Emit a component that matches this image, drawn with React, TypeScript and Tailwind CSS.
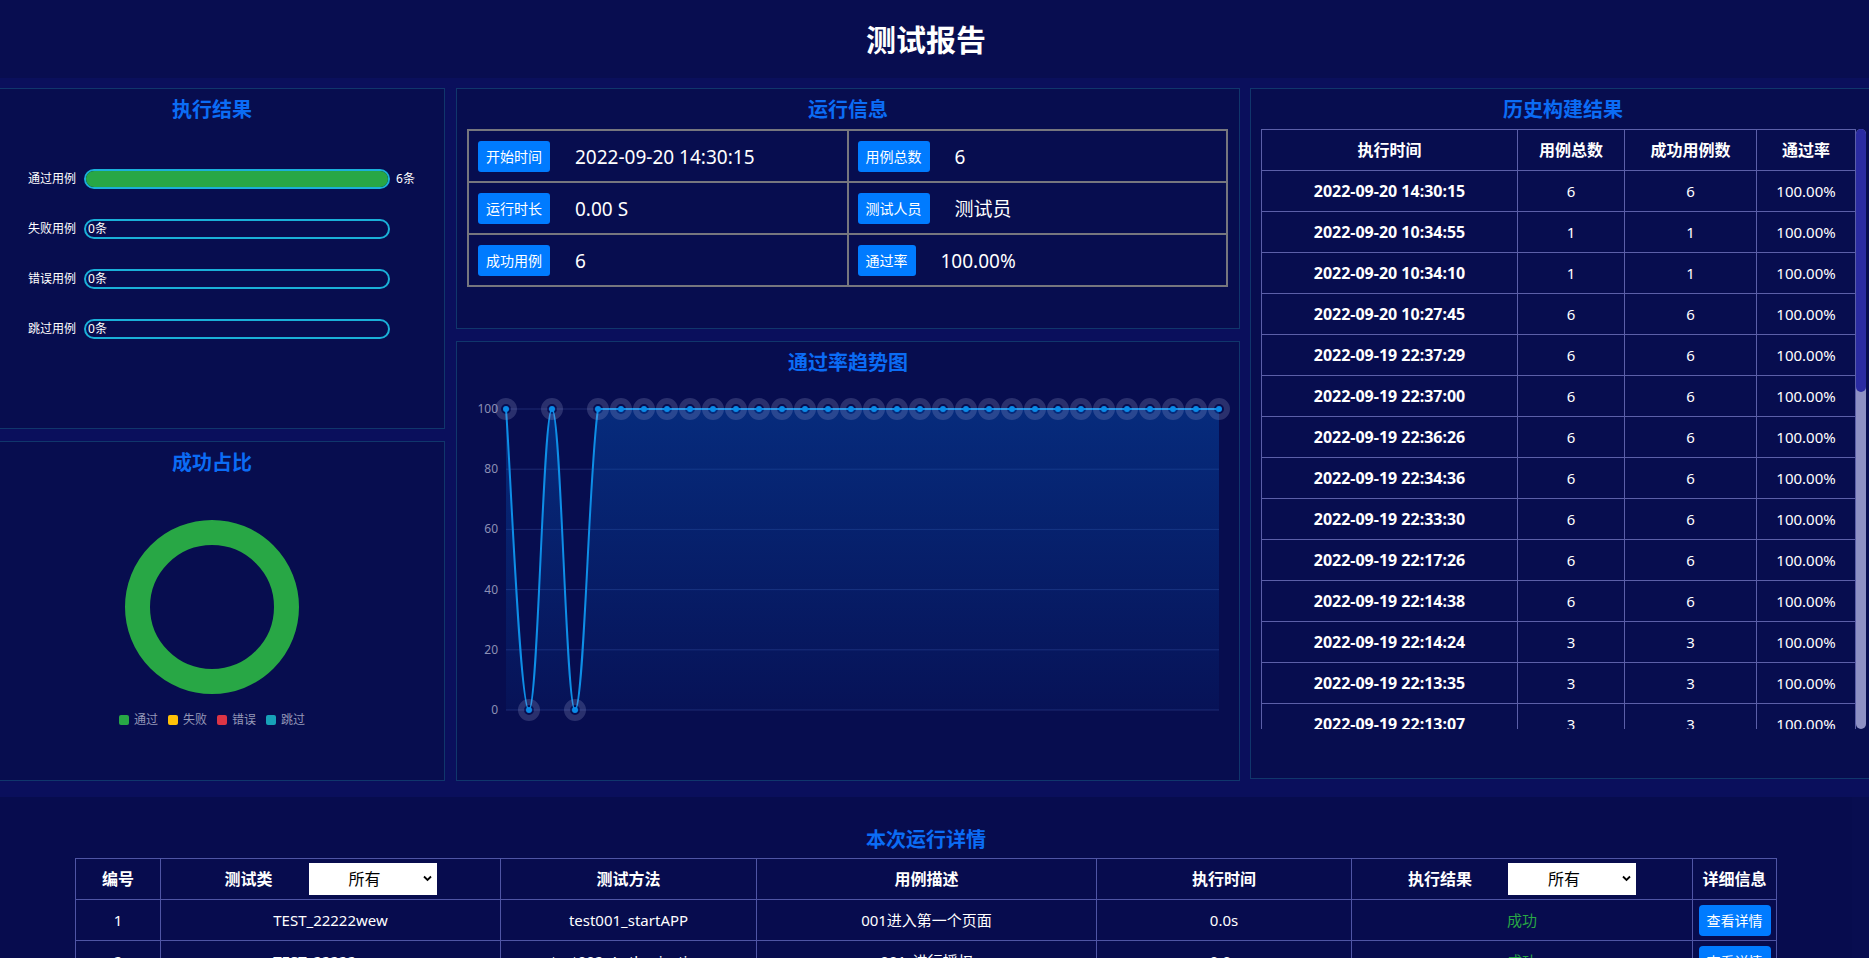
import React from 'react';

// Текстовый шрифт страницы
const font = "font-['Noto_Sans','Noto_Sans_CJK_SC',sans-serif]";

// Результаты выполнения
const results = [
  { label: '通过用例', count: 6, filled: true },
  { label: '失败用例', count: 0, filled: false },
  { label: '错误用例', count: 0, filled: false },
  { label: '跳过用例', count: 0, filled: false },
];

const legend = [
  { label: '通过', color: 'bg-[#28a745]' },
  { label: '失败', color: 'bg-[#ffc107]' },
  { label: '错误', color: 'bg-[#dc3545]' },
  { label: '跳过', color: 'bg-[#17a2b8]' },
];

const history: [string, number, number][] = [
  ['2022-09-20 14:30:15', 6, 6],
  ['2022-09-20 10:34:55', 1, 1],
  ['2022-09-20 10:34:10', 1, 1],
  ['2022-09-20 10:27:45', 6, 6],
  ['2022-09-19 22:37:29', 6, 6],
  ['2022-09-19 22:37:00', 6, 6],
  ['2022-09-19 22:36:26', 6, 6],
  ['2022-09-19 22:34:36', 6, 6],
  ['2022-09-19 22:33:30', 6, 6],
  ['2022-09-19 22:17:26', 6, 6],
  ['2022-09-19 22:14:38', 6, 6],
  ['2022-09-19 22:14:24', 3, 3],
  ['2022-09-19 22:13:35', 3, 3],
  ['2022-09-19 22:13:07', 3, 3],
  ['2022-09-19 22:12:41', 3, 3],
  ['2022-09-19 22:10:02', 3, 3],
  ['2022-09-19 21:58:47', 3, 3],
  ['2022-09-19 21:55:13', 3, 3],
  ['2022-09-19 21:50:36', 2, 2],
  ['2022-09-19 21:47:20', 2, 2],
  ['2022-09-19 21:40:09', 2, 2],
  ['2022-09-19 21:32:54', 2, 2],
  ['2022-09-19 21:30:18', 2, 2],
  ['2022-09-19 21:21:45', 2, 2],
  ['2022-09-19 21:16:07', 2, 2],
  ['2022-09-19 21:10:33', 2, 2],
  ['2022-09-19 20:58:29', 1, 1],
  ['2022-09-19 20:51:12', 1, 1],
  ['2022-09-19 20:44:50', 1, 1],
  ['2022-09-19 20:40:03', 1, 1],
  ['2022-09-19 20:36:27', 1, 1],
  ['2022-09-19 20:31:15', 1, 1],
];

// Точки графика: два провала, дальше всё 100
const trend = Array.from({ length: 32 }, (_, i) => (i === 1 || i === 3 ? 0 : 100));

const details = [
  ['1', 'TEST_22222wew', 'test001_startAPP', '001进入第一个页面', '0.0s'],
  ['2', 'TEST_22222wew', 'test002_Authorization', '001_进行授权', '0.0s'],
  ['3', 'TEST_22222wew', 'test003_login', '003登录', '0.0s'],
  ['4', 'TEST_22222wew', 'test004_search', '004搜索', '0.0s'],
  ['5', 'TEST_22222wew', 'test005_detail', '005查看详情', '0.0s'],
  ['6', 'TEST_22222wew', 'test006_logout', '006退出登录', '0.0s'],
];

const Panel = ({ title, className, children }: { title: string; className?: string; children?: React.ReactNode }) => (
  <div className={`border border-[#10366c] bg-[#070d4f] flex flex-col ${className ?? ''}`}>
    <h2 className="pt-[8px] text-center text-[20px] leading-[26px] font-bold text-[#0b6cf5]">{title}</h2>
    {children}
  </div>
);

const Badge = ({ text }: { text: string }) => (
  <span className="inline-flex h-[31px] items-center rounded-[3px] bg-[#007bff] px-2 text-[14px] text-white">{text}</span>
);

// Сглаженная линия как в echarts
const smoothPath = (pts: [number, number][]) => {
  const s = 0.4;
  let d = `M${pts[0][0]},${pts[0][1]}`;
  for (let i = 0; i < pts.length - 1; i++) {
    const p0 = pts[i - 1] ?? pts[i];
    const p1 = pts[i];
    const p2 = pts[i + 1];
    const p3 = pts[i + 2] ?? p2;
    const lo = Math.min(p1[1], p2[1]);
    const hi = Math.max(p1[1], p2[1]);
    const c1x = p1[0] + (p2[0] - p0[0]) * s * 0.5;
    const c1y = Math.min(hi, Math.max(lo, p1[1] + (p2[1] - p0[1]) * s * 0.5));
    const c2x = p2[0] - (p3[0] - p1[0]) * s * 0.5;
    const c2y = Math.min(hi, Math.max(lo, p2[1] - (p3[1] - p1[1]) * s * 0.5));
    d += ` C${c1x},${c1y} ${c2x},${c2y} ${p2[0]},${p2[1]}`;
  }
  return d;
};

const TrendChart = () => {
  const x0 = 49;
  const step = 23;
  const base = 331;
  const pts = trend.map((v, i) => [x0 + i * step, base - v * 3.01] as [number, number]);
  const line = smoothPath(pts);
  const last = pts[pts.length - 1][0];
  const area = `${line} L${last},${base} L${x0},${base} Z`;
  const ticks = [100, 80, 60, 40, 20, 0];

  return (
    <svg width="782" height="390" className="mt-[3px]">
      <defs>
        <linearGradient id="areaFill" x1="0" y1="0" x2="0" y2="1">
          <stop offset="0%" stopColor="#0550b4" stopOpacity="0.45" />
          <stop offset="100%" stopColor="#0550b4" stopOpacity="0.08" />
        </linearGradient>
      </defs>
      {ticks.map((t) => {
        const y = base - t * 3.01;
        return (
          <g key={t}>
            <line x1={x0} x2={last} y1={y} y2={y} stroke="#1e2a72" strokeWidth="1" />
            <text x="41" y={y + 4} textAnchor="end" fontSize="12" fill="#8c8fb5" fontFamily="Noto Sans, sans-serif">
              {t}
            </text>
          </g>
        );
      })}
      <path d={area} fill="url(#areaFill)" />
      <path d={line} fill="none" stroke="#0e8ee6" strokeWidth="2" />
      {pts.map(([x, y], i) => (
        <g key={i}>
          <circle cx={x} cy={y} r="8" fill="none" stroke="rgba(170,175,220,0.22)" strokeWidth="6" />
          <circle cx={x} cy={y} r="3" fill="#0a8ae6" />
        </g>
      ))}
    </svg>
  );
};

const FilterSelect = () => (
  <span className="relative inline-block">
    <select className="h-[32px] w-[128px] appearance-none bg-white pr-4 text-[16px] font-normal text-black [text-align-last:center]">
      <option>所有</option>
      <option>成功</option>
      <option>失败</option>
    </select>
    <svg className="pointer-events-none absolute right-[5px] top-[12px]" width="9" height="7" viewBox="0 0 9 7">
      <path d="M1 1.5 L4.5 5 L8 1.5" fill="none" stroke="#000" strokeWidth="1.8" />
    </svg>
  </span>
);

export default function App() {
  return (
    <div className={`h-screen overflow-x-hidden overflow-y-auto bg-[#080d50] text-white [scrollbar-width:none] ${font}`}>
      {/* Заголовок */}
      <header className="flex h-[78px] w-[1852px] items-center justify-center">
        <h1 className="text-[30px] font-bold">测试报告</h1>
      </header>

      {/* Панели */}
      <div className="bg-[#0a0f5c] pt-[10px] pb-[16px]">
        <div className="ml-[-21px] flex w-[1897px] gap-[11px]">
          {/* Левая колонка */}
          <div className="flex w-[466px] flex-col gap-3">
            <Panel title="执行结果" className="h-[341px]">
              <div className="mt-[46px] flex flex-col gap-[30px] pl-[48px]">
                {results.map((r) => (
                  <div key={r.label} className="flex h-5 items-center text-[12px]">
                    <span className="w-[56px]">{r.label}</span>
                    <div className="flex h-5 w-[306px] items-center rounded-full border-2 border-[#1ab0d8] bg-[#070d4f]">
                      {r.filled ? (
                        <div className="h-full w-full rounded-full bg-[#28a745]" />
                      ) : (
                        <span className="pl-[2px] leading-none">{r.count}条</span>
                      )}
                    </div>
                    {r.filled && <span className="ml-[6px]">{r.count}条</span>}
                  </div>
                ))}
              </div>
            </Panel>
            <Panel title="成功占比" className="h-[340px]">
              <div className="mt-[44px] flex justify-center">
                <svg width="174" height="174" viewBox="0 0 174 174">
                  <circle cx="87" cy="87" r="74.5" fill="none" stroke="#28a745" strokeWidth="25" />
                </svg>
              </div>
              <div className="mt-[19px] flex justify-center gap-[10px] text-[12px] leading-[14px] text-[#9598b8]">
                {legend.map((l) => (
                  <span key={l.label} className="flex items-center gap-[5px]">
                    <span className={`h-[10px] w-[10px] rounded-[2px] ${l.color}`} />
                    {l.label}
                  </span>
                ))}
              </div>
            </Panel>
          </div>

          {/* Средняя колонка */}
          <div className="flex w-[784px] flex-col gap-3">
            <Panel title="运行信息" className="h-[241px]">
              <table className="mt-[6px] ml-[10px] w-[761px] border-collapse">
                <tbody>
                  {[
                    ['开始时间', '2022-09-20 14:30:15', '用例总数', '6'],
                    ['运行时长', '0.00 S', '测试人员', '测试员'],
                    ['成功用例', '6', '通过率', '100.00%'],
                  ].map((row) => (
                    <tr key={row[0]} className="h-[52px]">
                      <td className="w-1/2 border-2 border-[#76767e] pl-[9px]">
                        <Badge text={row[0]} />
                        <span className="ml-[25px] text-[19px] align-middle">{row[1]}</span>
                      </td>
                      <td className="w-1/2 border-2 border-[#76767e] pl-[9px]">
                        <Badge text={row[2]} />
                        <span className="ml-[25px] text-[19px] align-middle">{row[3]}</span>
                      </td>
                    </tr>
                  ))}
                </tbody>
              </table>
            </Panel>
            <Panel title="通过率趋势图" className="h-[440px]">
              <TrendChart />
            </Panel>
          </div>

          {/* Правая колонка */}
          <div className="ml-[-1px] w-[626px]">
            <Panel title="历史构建结果" className="h-[691px]">
              <div className="mt-[6px] ml-[10px] flex h-[600px] w-[605px]">
                <div className="h-full w-[595px] overflow-y-auto [scrollbar-width:none]">
                  <table className="w-full border-collapse text-center">
                    <thead>
                      <tr className="h-[41px] text-[16px] font-bold">
                        <th className="w-[256px] border border-[#5b5fa8]">执行时间</th>
                        <th className="w-[107px] border border-[#5b5fa8]">用例总数</th>
                        <th className="w-[132px] border border-[#5b5fa8]">成功用例数</th>
                        <th className="border border-[#5b5fa8]">通过率</th>
                      </tr>
                    </thead>
                    <tbody className="text-[15px]">
                      {history.map(([time, total, ok]) => (
                        <tr key={time} className="h-[41px]">
                          <td className="border border-[#5b5fa8] text-[16px] font-bold">{time}</td>
                          <td className="border border-[#5b5fa8]">{total}</td>
                          <td className="border border-[#5b5fa8]">{ok}</td>
                          <td className="border border-[#5b5fa8]">100.00%</td>
                        </tr>
                      ))}
                    </tbody>
                  </table>
                </div>
                {/* Полоса прокрутки */}
                <div className="flex h-full w-[10px] flex-col rounded-full bg-[#8e91c4]">
                  <div className="h-[263px] w-full rounded-full bg-[#2a2ba2]" />
                </div>
              </div>
            </Panel>
          </div>
        </div>
      </div>

      {/* Детали текущего запуска */}
      <section className="w-[1852px] bg-[#070c4e] pt-[30px] pb-10">
        <h2 className="text-center text-[20px] leading-[26px] font-bold text-[#0b6cf5]">本次运行详情</h2>
        <table className="mx-auto mt-[5px] w-[1702px] border-collapse text-center">
          <thead>
            <tr className="h-[41px] text-[16px] font-bold">
              <th className="w-[85px] border border-[#4f55a5]">编号</th>
              <th className="w-[340px] border border-[#4f55a5]">
                <span className="inline-flex items-center gap-9">
                  测试类
                  <FilterSelect />
                </span>
              </th>
              <th className="w-[256px] border border-[#4f55a5]">测试方法</th>
              <th className="w-[340px] border border-[#4f55a5]">用例描述</th>
              <th className="w-[255px] border border-[#4f55a5]">执行时间</th>
              <th className="w-[341px] border border-[#4f55a5]">
                <span className="inline-flex items-center gap-9">
                  执行结果
                  <FilterSelect />
                </span>
              </th>
              <th className="border border-[#4f55a5]">详细信息</th>
            </tr>
          </thead>
          <tbody className="text-[15px]">
            {details.map((d) => (
              <tr key={d[0]} className="h-[41px]">
                {d.map((c, i) => (
                  <td key={i} className="border border-[#4f55a5]">{c}</td>
                ))}
                <td className="border border-[#4f55a5] text-[#28a745]">成功</td>
                <td className="border border-[#4f55a5]">
                  <button className="h-[31px] rounded-[4px] bg-[#007bff] px-2 text-[14px] text-white">查看详情</button>
                </td>
              </tr>
            ))}
          </tbody>
        </table>
      </section>
    </div>
  );
}
